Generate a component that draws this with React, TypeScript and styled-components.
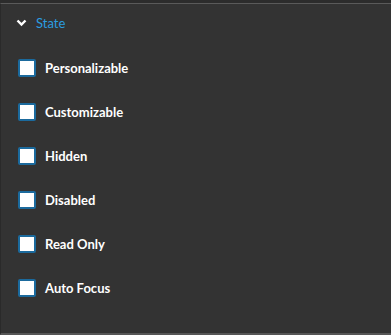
import React from "react";
import styled, { createGlobalStyle } from "styled-components";

const Global = createGlobalStyle`
  html, body { margin: 0; padding: 0; background: #2c2c2c; }
  body { font-family: Lato, "Open Sans", sans-serif; }
`;

const Panel = styled.div`
  box-sizing: border-box;
  width: 391px;
  height: 332px;
  margin-top: 3px;
  background: #333333;
  border-top: 1px solid #5a5a5a;
  border-left: 1px solid #2a2a2a;
  border-bottom: 2px solid #565656;
  display: flex;
  flex-direction: column;
`;

const Header = styled.div`
  display: flex;
  align-items: center;
  gap: 9px;
  height: 38px;
  padding-left: 15px;
`;

const Title = styled.span`
  color: #2b9de0;
  font-size: 13px;
  font-weight: 400;
  line-height: 1;
`;

const List = styled.div`
  display: flex;
  flex-direction: column;
  padding-top: 4px;
`;

const Row = styled.label`
  display: flex;
  align-items: center;
  gap: 9px;
  height: 44px;
  padding-left: 17px;
`;

const Box = styled.span`
  box-sizing: border-box;
  width: 18px;
  height: 18px;
  background: #ffffff;
  border: 2px solid #1b6a9d;
  border-radius: 2px;
`;

const Label = styled.span`
  color: #ffffff;
  font-size: 13px;
  font-weight: 700;
`;

const items = ["Personalizable", "Customizable", "Hidden", "Disabled", "Read Only", "Auto Focus"];

export default function App() {
  return (
    <>
      <Global />
      <Panel>
        <Header>
          <svg width="11" height="8" viewBox="0 0 11 8">
            <path d="M1.5 1.5 L5.5 5.5 L9.5 1.5" fill="none" stroke="#ffffff" strokeWidth="2.4" />
          </svg>
          <Title>State</Title>
        </Header>
        <List>
          {items.map((t) => (
            <Row key={t}>
              <Box />
              <Label>{t}</Label>
            </Row>
          ))}
        </List>
      </Panel>
    </>
  );
}
